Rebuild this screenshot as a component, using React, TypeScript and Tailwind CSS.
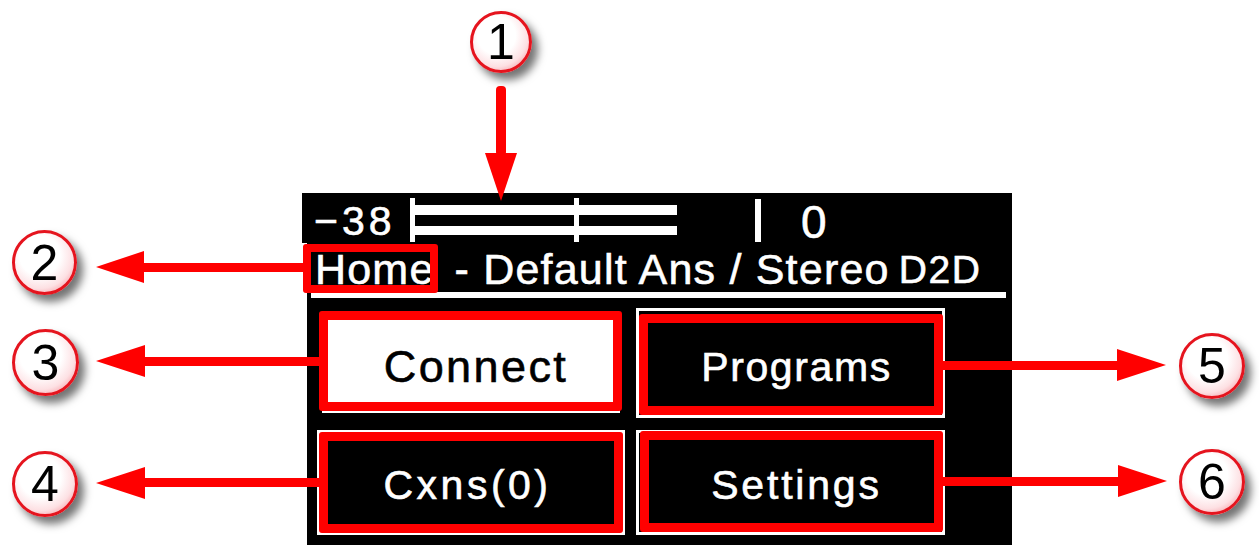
const DIGIT_BADGES = [
  { n: "1", cls: "left-[470px] top-[11px] w-[62px] h-[62px]" },
  { n: "2", cls: "left-[12px] top-[230px] w-[65px] h-[65px]" },
  { n: "3", cls: "left-[12px] top-[329px] w-[67px] h-[67px]" },
  { n: "4", cls: "left-[12px] top-[451px] w-[66px] h-[66px]" },
  { n: "5", cls: "left-[1179px] top-[333px] w-[66px] h-[66px]" },
  { n: "6", cls: "left-[1179px] top-[449px] w-[66px] h-[66px]" },
];

function Badge({ n, cls }: { n: string; cls: string }) {
  return (
    <div
      className={`absolute ${cls} flex items-center justify-center rounded-full border-[3px] border-[#e5141e] bg-[radial-gradient(circle_at_42%_38%,#ffffff_40%,#fde0e3_66%,#f0707a_100%)] shadow-[6px_7px_8px_rgba(0,0,0,0.55)] text-[50px] leading-none text-black font-['Liberation_Sans',sans-serif]`}
    >
      {n}
    </div>
  );
}

function Arrows() {
  return (
    <svg className="absolute left-0 top-0" width="1259" height="547" fill="#ff0000">
      {/* 1 */}
      <rect x="496" y="86" width="10" height="70" rx="4" />
      <polygon points="485,153 517,153 501,201" />
      {/* 2 */}
      <rect x="140" y="263" width="165" height="9" />
      <polygon points="96,267 144,251 144,283" />
      {/* 3 */}
      <rect x="140" y="357" width="182" height="9" />
      <polygon points="96,361 145,345 145,377" />
      {/* 4 */}
      <rect x="140" y="478" width="182" height="9" />
      <polygon points="96,483 145,467 145,499" />
      {/* 5 */}
      <rect x="942" y="361" width="180" height="9" />
      <polygon points="1166,365 1117,349 1117,381" />
      {/* 6 */}
      <rect x="942" y="477" width="180" height="9" />
      <polygon points="1167,481 1118,465 1118,497" />
    </svg>
  );
}

function Tick({ className }: { className: string }) {
  return <div className={`bg-white ${className}`} />;
}

export default function App() {
  return (
    <div className="relative h-[547px] w-[1259px] overflow-hidden bg-white pl-[307px] pt-[193px] font-['Liberation_Sans',sans-serif]">
      {/* device screen */}
      <div className="h-[352px] w-[705px] bg-black text-white [-webkit-text-stroke:0.6px_currentColor]">
        {/* level meter */}
        <div className="-ml-[5px] flex h-[50px] w-[710px] items-center bg-black">
          <span className="ml-[12px] w-[96px] pt-[6px] text-[41px] leading-none tracking-[4px]">−38</span>
          <div className="relative mt-[4px] h-[44px] w-[267px]">
            <Tick className="absolute left-0 top-0 h-[44px] w-[5px]" />
            <Tick className="absolute left-[4px] top-[7px] h-[10px] w-[263px]" />
            <Tick className="absolute left-[4px] top-[28px] h-[9px] w-[263px]" />
            <Tick className="absolute left-[164px] top-0 h-[44px] w-[5px]" />
          </div>
          <Tick className="ml-[78px] mt-[4px] h-[43px] w-[6px]" />
          <span className="ml-[40px] pt-[8px] text-[46px] leading-none">0</span>
        </div>

        {/* title */}
        <div className="flex h-[49px] items-end pl-[8px] text-[43px] leading-[46px] tracking-[1.2px] whitespace-nowrap">
          <span>Home</span>
          <span className="ml-[20px]">- Default Ans / Stereo</span>
          <span className="ml-[9px] text-[39px] leading-[44px] tracking-[1.6px]">D2D</span>
        </div>
        <div className="ml-[4px] h-[6px] w-[695px] bg-white" />

        {/* menu buttons */}
        <div className="ml-[10px] mt-[10px] grid grid-cols-[308px_309px] grid-rows-[110px_105px] gap-x-[11px] gap-y-[12px]">
          <div className="mx-[5px] mb-[5px] mt-[5px] flex items-center justify-center bg-white pl-[10px] pt-[8px] text-[45px] tracking-[2.4px] text-black">
            Connect
          </div>
          <div className="flex items-center justify-center border-[3px] border-white pl-[12px] pt-[10px] text-[41px] tracking-[1.6px]">
            Programs
          </div>
          <div className="flex items-center justify-center border-[3px] border-white pr-[7px] pt-[6px] text-[41px] tracking-[3.5px]">
            Cxns(0)
          </div>
          <div className="flex items-center justify-center border-[3px] border-white pl-[12px] pt-[6px] text-[41px] tracking-[2.8px]">
            Settings
          </div>
        </div>
      </div>

      {/* annotation boxes */}
      <div className="absolute left-[303px] top-[244px] h-[49px] w-[135px] rounded-[3px] border-[8px] border-[#ff0000]" />
      <div className="absolute left-[319px] top-[311px] h-[100px] w-[303px] rounded-[3px] border-[9px] border-[#ff0000]" />
      <div className="absolute left-[639px] top-[314px] h-[101px] w-[304px] rounded-[3px] border-[9px] border-[#ff0000]" />
      <div className="absolute left-[319px] top-[432px] h-[101px] w-[304px] rounded-[3px] border-[9px] border-[#ff0000]" />
      <div className="absolute left-[640px] top-[431px] h-[101px] w-[303px] rounded-[3px] border-[9px] border-[#ff0000]" />

      <Arrows />
      {DIGIT_BADGES.map((b) => (
        <Badge key={b.n} n={b.n} cls={b.cls} />
      ))}
    </div>
  );
}
